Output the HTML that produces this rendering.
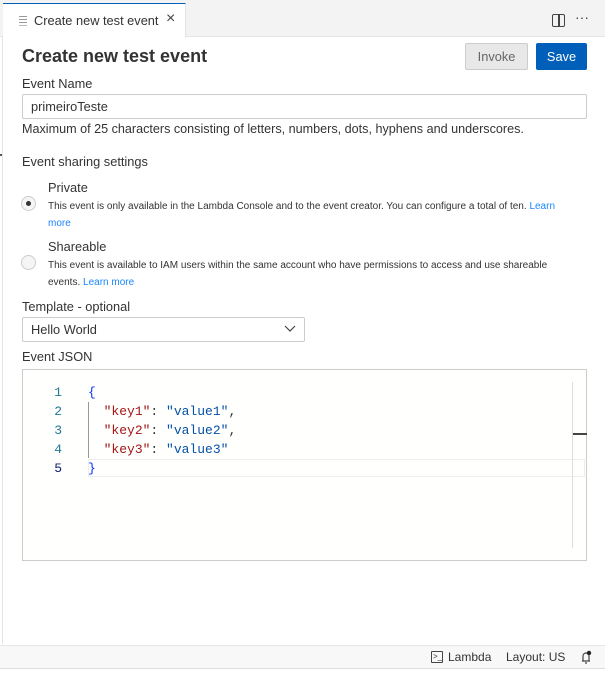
<!DOCTYPE html>
<html><head><style>
*{margin:0;padding:0;box-sizing:border-box}
body{width:605px;height:680px;background:#fff;font-family:"Liberation Sans",sans-serif;color:#333;position:relative;overflow:hidden;font-size:12.8px}
.a{position:absolute;white-space:nowrap}
.mono{font-family:"Liberation Mono","DejaVu Sans Mono",monospace;font-size:13px}
</style></head><body>
<div class="a" style="left:0;top:0;width:605px;height:37px;background:#f3f3f3;border-bottom:1px solid #e5e5e5"></div>
<div class="a" style="left:3px;top:3px;width:183px;height:35px;background:#fff;border-top:1px solid #005fb8;border-right:1px solid #e5e5e5"></div>
<div class="a" style="left:19px;top:16px;width:8px;height:1px;background:#999;box-shadow:0 3px #999,0 6px #999,0 9px #bbb"></div>
<div class="a" style="left:34px;top:13px;font-size:12.8px;color:#333">Create new test event</div>
<div class="a" style="left:166px;top:10px;font-size:16px;color:#444">×</div>
<div class="a" style="left:552px;top:14px;width:13px;height:13px;border:1.5px solid #444;border-radius:2px"></div>
<div class="a" style="left:558px;top:14px;width:1.5px;height:13px;background:#444"></div>
<div class="a" style="left:575px;top:9px;font-size:14px;color:#444">···</div>
<div class="a" style="left:2px;top:37px;width:1px;height:607px;background:#e5e5e5"></div>
<div class="a" style="left:22px;top:46px;font-size:18px;font-weight:bold;color:#333">Create new test event</div>
<div class="a" style="left:465px;top:43px;width:63px;height:27px;background:#e8e8e8;border:1px solid #ccc;border-radius:2px;color:#666;text-align:center;line-height:25px">Invoke</div>
<div class="a" style="left:536px;top:43px;width:51px;height:27px;background:#005fb8;border-radius:2px;color:#fff;text-align:center;line-height:27px">Save</div>
<div class="a" style="left:22px;top:76px">Event Name</div>
<div class="a" style="left:22px;top:94px;width:565px;height:25px;border:1px solid #ccc;border-radius:2px;padding-left:8px;line-height:23px">primeiroTeste</div>
<div class="a" style="left:22px;top:122px;font-size:12.6px">Maximum of 25 characters consisting of letters, numbers, dots, hyphens and underscores.</div>
<div class="a" style="left:22px;top:154px">Event sharing settings</div>
<div class="a" style="left:48px;top:180px">Private</div>
<div class="a" style="left:21px;top:196px;width:15px;height:15px;border-radius:50%;border:1px solid #ccc;background:#f5f5f5"></div>
<div class="a" style="left:26px;top:201px;width:5px;height:5px;border-radius:50%;background:#333"></div>
<div class="a" style="left:48px;top:198px;font-size:10px;line-height:17px;white-space:normal;width:528px">This event is only available in the Lambda Console and to the event creator. You can configure a total of ten. <span style="color:#1a85ff">Learn more</span></div>
<div class="a" style="left:48px;top:239px">Shareable</div>
<div class="a" style="left:21px;top:255px;width:15px;height:15px;border-radius:50%;border:1px solid #ccc;background:#f5f5f5"></div>
<div class="a" style="left:48px;top:257px;font-size:10px;line-height:17px;white-space:normal;width:515px">This event is available to IAM users within the same account who have permissions to access and use shareable events. <span style="color:#1a85ff">Learn more</span></div>
<div class="a" style="left:22px;top:299px">Template - optional</div>
<div class="a" style="left:22px;top:317px;width:283px;height:25px;border:1px solid #ccc;border-radius:2px;padding-left:8px;line-height:23px">Hello World</div>
<svg class="a" style="left:284px;top:325px" width="12" height="8"><path d="M1 1l5 5 5-5" fill="none" stroke="#444" stroke-width="1.2"/></svg>
<div class="a" style="left:22px;top:349px">Event JSON</div>
<div class="a" style="left:22px;top:369px;width:565px;height:192px;border:1px solid #ccc;background:#fffffe"></div>
<div class="a" style="left:572px;top:382px;width:1px;height:166px;background:#ddd"></div>
<div class="a" style="left:573px;top:433px;width:14px;height:2px;background:#444"></div>
<div class="a" style="left:88px;top:459px;width:497px;height:18px;border:1px solid #eee"></div>
<div class="a" style="left:88px;top:402px;width:1px;height:56px;background:#999"></div>
<div class="a mono" style="left:50px;top:383px;line-height:19px;color:#237893;text-align:right;width:12px">1<br>2<br>3<br>4<br><span style="color:#0b216f">5</span></div>
<div class="a mono" style="left:88px;top:383px;line-height:19px;color:#0451a5"><span style="color:#0431fa">{</span><br>&nbsp;&nbsp;<span style="color:#a31515">"key1"</span><span style="color:#333">: </span>"value1"<span style="color:#333">,</span><br>&nbsp;&nbsp;<span style="color:#a31515">"key2"</span><span style="color:#333">: </span>"value2"<span style="color:#333">,</span><br>&nbsp;&nbsp;<span style="color:#a31515">"key3"</span><span style="color:#333">: </span>"value3"<br><span style="color:#0431fa">}</span></div>
<div class="a" style="left:0;top:645px;width:605px;height:24px;background:#f8f8f8;border-top:1px solid #e5e5e5;border-bottom:1px solid #ddd"></div>
<div class="a" style="left:431px;top:651px;width:12px;height:12px;border:1px solid #444;border-radius:1px;font-size:8px;line-height:9px;padding-left:1px">&gt;_</div>
<div class="a" style="left:448px;top:650px;font-size:12px">Lambda</div>
<div class="a" style="left:506px;top:650px;font-size:12px">Layout: US</div>
<svg class="a" style="left:579px;top:650px" width="14" height="14"><path d="M3 11h8M4 11V6a3 3 0 016 0v5M6 13h2" fill="none" stroke="#444" stroke-width="1.2"/><circle cx="10" cy="3" r="2.2" fill="#222"/></svg>
<div class="a" style="left:0;top:154px;width:2px;height:2px;background:#555"></div>
</body></html>
